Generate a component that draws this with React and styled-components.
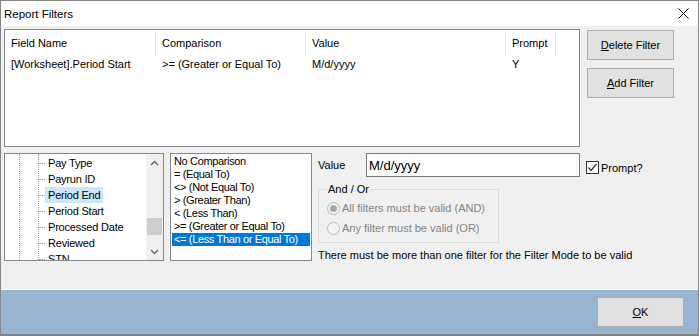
import React from "react";
import styled, { createGlobalStyle } from "styled-components";

const GlobalStyle = createGlobalStyle`
  html, body { margin: 0; padding: 0; background: #f0f0f0; }
  body {
    font-family: "Liberation Sans", Arial, sans-serif;
    font-size: 11px;
    color: #000;
  }
  * { box-sizing: border-box; }
`;

const Window = styled.div`
  width: 699px;
  height: 336px;
  border: 1px solid #858585;
  border-bottom-width: 2px;
  display: flex;
  flex-direction: column;
  background: #f0f0f0;
  overflow: hidden;
`;

const TitleBar = styled.div`
  height: 25px;
  flex: none;
  background: #fff;
  display: flex;
  align-items: center;
  justify-content: space-between;
  padding: 0 9px 0 3px;
`;

const TitleText = styled.span`
  font-size: 11.5px;
  line-height: 14px;
`;

const Client = styled.div`
  flex: 1;
  display: flex;
  flex-direction: column;
  padding: 3px 3px 0 3px;
`;

const TopRow = styled.div`
  display: flex;
  align-items: flex-start;
  gap: 7px;
`;

const GridBox = styled.div`
  width: 576px;
  height: 118px;
  border: 1px solid #828790;
  background: #fff;
  display: flex;
  flex-direction: column;
`;

const GridRow = styled.div`
  display: flex;
  height: ${(p) => p.$h}px;
`;

const HeaderCell = styled.div`
  width: ${(p) => p.$w}px;
  flex: none;
  height: 24px;
  margin-top: 1px;
  border-right: 1px solid #e5e5e5;
  padding-left: 6px;
  display: flex;
  align-items: center;
  white-space: nowrap;
`;

const DataCell = styled.div`
  width: ${(p) => p.$w}px;
  flex: none;
  padding-left: 6px;
  display: flex;
  align-items: center;
  white-space: nowrap;
`;

const ButtonColumn = styled.div`
  display: flex;
  flex-direction: column;
  gap: 8px;
  padding-top: 1px;
`;

const WinButton = styled.button`
  width: 87px;
  height: 30px;
  border: 1px solid #adadad;
  background: #e1e1e1;
  font-family: "Liberation Sans", Arial, sans-serif;
  font-size: 11px;
  color: #000;
  padding: 0;
  display: flex;
  align-items: center;
  justify-content: center;
  u { text-underline-offset: 1px; }
`;

const BottomRow = styled.div`
  display: flex;
  align-items: flex-start;
  gap: 6px;
  margin-top: 6px;
`;

const TreeBox = styled.div`
  width: 160px;
  height: 108px;
  border: 1px solid #828790;
  background: #fff;
  display: flex;
  flex: none;
`;

const TreeView = styled.div`
  flex: 1;
  display: flex;
  overflow: hidden;
  padding-top: 1px;
`;

const Indent = styled.div`
  width: 14px;
  flex: none;
`;

const GuideLine = styled.div`
  width: 19px;
  flex: none;
  border-left: 1px dotted #a0a0a0;
  margin-top: -1px;
`;

const TreeNodes = styled.div`
  flex: 1;
  border-left: 1px dotted #a0a0a0;
  margin-top: -1px;
  padding-top: 1px;
  display: flex;
  flex-direction: column;
`;

const TreeRow = styled.div`
  height: 16px;
  flex: none;
  display: flex;
  align-items: center;
`;

const Stub = styled.span`
  width: 6px;
  height: 1px;
  border-top: 1px dotted #a0a0a0;
  flex: none;
`;

const NodeLabel = styled.span`
  height: 16px;
  padding: 0 3px;
  display: flex;
  align-items: center;
  white-space: nowrap;
  background: ${(p) => (p.$selected ? "#cce8ff" : "transparent")};
  letter-spacing: -0.2px;
`;

const VScroll = styled.div`
  width: 17px;
  flex: none;
  background: #f0f0f0;
  display: flex;
  flex-direction: column;
`;

const ScrollArrow = styled.div`
  height: 17px;
  flex: none;
  display: flex;
  align-items: center;
  justify-content: center;
`;

const ScrollTrack = styled.div`
  flex: 1;
  padding-top: ${(p) => p.$offset}px;
`;

const Thumb = styled.div`
  height: 17px;
  margin: 0 1px;
  background: #cdcdcd;
`;

const ListBox = styled.div`
  width: 142px;
  height: 108px;
  flex: none;
  border: 1px solid #828790;
  background: #fff;
  padding-top: 1px;
  display: flex;
  flex-direction: column;
`;

const ListItem = styled.div`
  height: 13px;
  line-height: 13px;
  margin: 0 1px;
  padding-left: 2px;
  white-space: nowrap;
  letter-spacing: -0.35px;
  background: ${(p) => (p.$selected ? "#0078d7" : "transparent")};
  color: ${(p) => (p.$selected ? "#fff" : "#000")};
`;

const RightPanel = styled.div`
  flex: 1;
  display: flex;
  flex-direction: column;
`;

const ValueRow = styled.div`
  display: flex;
  align-items: flex-start;
  height: 24px;
`;

const FieldLabel = styled.label`
  width: 48px;
  height: 24px;
  display: flex;
  align-items: center;
  flex: none;
`;

const ValueInput = styled.input`
  width: 214px;
  height: 24px;
  flex: none;
  border: 1px solid #7a7a7a;
  background: #fff;
  font-family: "Liberation Sans", Arial, sans-serif;
  font-size: 13px;
  color: #000;
  padding: 0 0 0 2px;
  margin: 0;
  outline: none;
`;

const CheckWrap = styled.div`
  display: flex;
  align-items: center;
  gap: 2px;
  height: 13px;
  margin: 8px 0 0 6px;
`;

const CheckBox = styled.span`
  width: 13px;
  height: 13px;
  border: 1px solid #333;
  background: #fff;
  display: flex;
  align-items: center;
  justify-content: center;
`;

const GroupBox = styled.fieldset`
  width: 181px;
  margin: 5px 0 0 0;
  padding: 2px 0 4px 8px;
  border: 1px solid #dcdcdc;
  min-width: 0;
`;

const Legend = styled.legend`
  padding: 0 1px;
  line-height: 14px;
  font-size: 11px;
  color: #000;
`;

const RadioRow = styled.div`
  height: 20px;
  display: flex;
  align-items: center;
  gap: 2px;
  color: #838383;
  white-space: nowrap;
`;

const RadioCircle = styled.span`
  width: 13px;
  height: 13px;
  border-radius: 50%;
  border: 1px solid #bcbcbc;
  background: #f4f4f4;
  display: flex;
  align-items: center;
  justify-content: center;
  flex: none;
`;

const RadioDot = styled.span`
  width: 7px;
  height: 7px;
  border-radius: 50%;
  background: #a8a8a8;
`;

const Message = styled.div`
  margin-top: 5px;
  line-height: 14px;
  white-space: nowrap;
`;

const Footer = styled.div`
  height: 45px;
  flex: none;
  border-top: 1px solid #fff;
  background: #99b4d1;
  display: flex;
  justify-content: flex-end;
  align-items: flex-start;
  padding: 7px 14px 0 0;
`;

const CloseIcon = () => (
  <svg width="11" height="11" viewBox="0 0 11 11">
    <path d="M0.5 0.5 L10.5 10.5 M10.5 0.5 L0.5 10.5" stroke="#000" strokeWidth="1" />
  </svg>
);

const Chevron = ({ up }) => (
  <svg width="9" height="6" viewBox="0 0 9 6">
    <path
      d={up ? "M1 5 L4.5 1.5 L8 5" : "M1 1 L4.5 4.5 L8 1"}
      stroke="#606060"
      strokeWidth="1.3"
      fill="none"
    />
  </svg>
);

const CheckMark = () => (
  <svg width="11" height="11" viewBox="0 0 11 11">
    <path d="M1.5 5.5 L4 8.5 L9.5 2" stroke="#333" strokeWidth="1.2" fill="none" />
  </svg>
);

const columns = [
  { name: "Field Name", w: 151, value: "[Worksheet].Period Start" },
  { name: "Comparison", w: 150, value: ">= (Greater or Equal To)" },
  { name: "Value", w: 200, value: "M/d/yyyy" },
  { name: "Prompt", w: 50, value: "Y" },
];

const treeNodes = [
  "Pay Type",
  "Payrun ID",
  "Period End",
  "Period Start",
  "Processed Date",
  "Reviewed",
  "STN",
];

const comparisons = [
  "No Comparison",
  "= (Equal To)",
  "<> (Not Equal To)",
  "> (Greater Than)",
  "< (Less Than)",
  ">= (Greater or Equal To)",
  "<= (Less Than or Equal To)",
];

export default function App() {
  return (
    <>
      <GlobalStyle />
      <Window>
        <TitleBar>
          <TitleText>Report Filters</TitleText>
          <CloseIcon />
        </TitleBar>
        <Client>
          <TopRow>
            <GridBox>
              <GridRow $h={25}>
                {columns.map((c) => (
                  <HeaderCell key={c.name} $w={c.w}>
                    {c.name}
                  </HeaderCell>
                ))}
              </GridRow>
              <GridRow $h={18}>
                {columns.map((c) => (
                  <DataCell key={c.name} $w={c.w}>
                    {c.value}
                  </DataCell>
                ))}
              </GridRow>
            </GridBox>
            <ButtonColumn>
              <WinButton>
                <span>
                  <u>D</u>elete Filter
                </span>
              </WinButton>
              <WinButton>
                <span>
                  <u>A</u>dd Filter
                </span>
              </WinButton>
            </ButtonColumn>
          </TopRow>
          <BottomRow>
            <TreeBox>
              <TreeView>
                <Indent />
                <GuideLine />
                <TreeNodes>
                  {treeNodes.map((n) => (
                    <TreeRow key={n}>
                      <Stub />
                      <NodeLabel $selected={n === "Period End"}>{n}</NodeLabel>
                    </TreeRow>
                  ))}
                </TreeNodes>
              </TreeView>
              <VScroll>
                <ScrollArrow>
                  <Chevron up />
                </ScrollArrow>
                <ScrollTrack $offset={47}>
                  <Thumb />
                </ScrollTrack>
                <ScrollArrow>
                  <Chevron />
                </ScrollArrow>
              </VScroll>
            </TreeBox>
            <ListBox>
              {comparisons.map((c, i) => (
                <ListItem key={c} $selected={i === comparisons.length - 1}>
                  {c}
                </ListItem>
              ))}
            </ListBox>
            <RightPanel>
              <ValueRow>
                <FieldLabel>Value</FieldLabel>
                <ValueInput readOnly value="M/d/yyyy" />
                <CheckWrap>
                  <CheckBox>
                    <CheckMark />
                  </CheckBox>
                  <span>Prompt?</span>
                </CheckWrap>
              </ValueRow>
              <GroupBox>
                <Legend>And / Or</Legend>
                <RadioRow>
                  <RadioCircle>
                    <RadioDot />
                  </RadioCircle>
                  <span>All filters must be valid (AND)</span>
                </RadioRow>
                <RadioRow>
                  <RadioCircle />
                  <span>Any filter must be valid (OR)</span>
                </RadioRow>
              </GroupBox>
              <Message>There must be more than one filter for the Filter Mode to be valid</Message>
            </RightPanel>
          </BottomRow>
        </Client>
        <Footer>
          <WinButton>
            <span>
              <u>O</u>K
            </span>
          </WinButton>
        </Footer>
      </Window>
    </>
  );
}
